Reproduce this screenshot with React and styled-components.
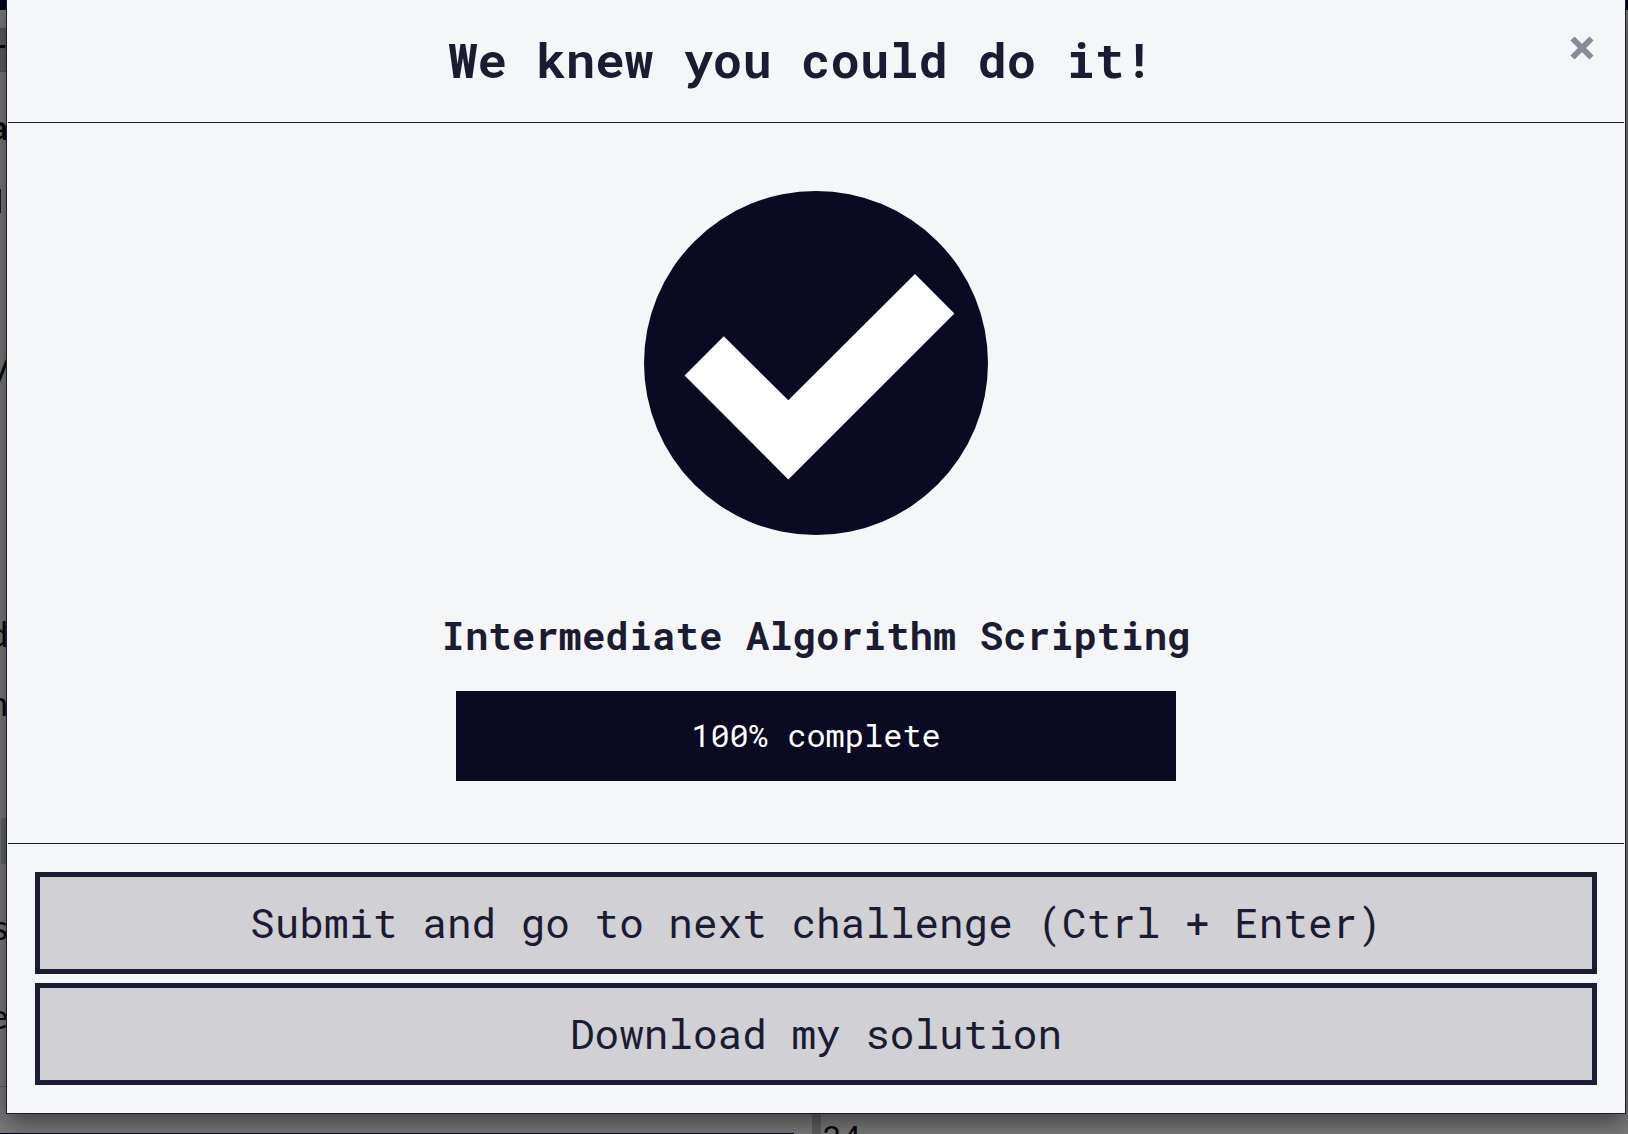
import React from "react";
import styled, { createGlobalStyle } from "styled-components";

const ink = "#1b1b32";
const deep = "#0a0a23";
const paper = "#f5f6f7";
const mono = '"Roboto Mono", "DejaVu Sans Mono", "Liberation Mono", monospace';

const GlobalStyle = createGlobalStyle`
  *, *::before, *::after { box-sizing: border-box; }
  html, body { margin: 0; height: 100%; overflow: hidden; }
  #root { height: 100%; }
`;

const Page = styled.div`
  position: relative;
  height: 100%;
  overflow: hidden;
  background: #7c7c7c;
`;

/* The dimmed lesson page that the dialog lies over */
const Backdrop = styled.div`
  position: absolute;
  inset: 0;
  display: flex;
  flex-direction: column;
  font-family: Lato, sans-serif;
  color: #08080f;
`;

const NavBar = styled.div`
  flex: none;
  height: 10px;
  background: #03031a;
`;

const Panes = styled.div`
  display: flex;
  flex: 1;
  min-height: 0;
`;

const LessonPane = styled.div`
  display: flex;
  flex: 0 0 calc(50% - 2px);
  flex-direction: column;
  padding-right: 18px;
`;

const LessonRow = styled.div`
  display: flex;
  flex: none;
  align-items: center;
  justify-content: flex-end;
  width: 8px;
  height: ${(p) => p.$height}px;
  font-size: 34px;
  line-height: 40px;
  font-weight: ${(p) => (p.$bold ? 700 : 400)};
  font-style: ${(p) => (p.$italic ? "italic" : "normal")};
`;

const TabRow = styled(LessonRow)`
  border-top: 1px solid #555;
  border-bottom: 1px solid #555;
  background: #606064;
  font-family: ${mono};
`;

const CodeRow = styled(LessonRow)`
  border-left: 1px solid #7c7c7c;
  background: #66676b;
`;

const Caret = styled.div`
  width: 1px;
  height: 24px;
  margin-right: auto;
  background: ${ink};
`;

const LessonEnd = styled.div`
  flex: 1;
  border-top: 1px solid #606060;
  border-bottom: 1px solid #03031a;
`;

const Splitter = styled.div`
  flex: none;
  width: 9px;
  background: #606064;
`;

const EditorPane = styled.div`
  display: flex;
  flex: 1;
  flex-direction: column;
  justify-content: flex-end;
  padding-left: 2px;
`;

const LineNumber = styled.div`
  height: 16px;
  font-family: ${mono};
  font-size: 32px;
  line-height: 36px;
`;

const Dialog = styled.section`
  position: relative;
  margin: 0 2px 0 6px;
  padding: 0 1px;
  border: 1px solid ${ink};
  border-top: 0;
  background: ${paper};
  color: ${ink};
  font-family: ${mono};
  box-shadow: 0 8px 24px rgba(0, 0, 0, 0.5);
`;

const Header = styled.header`
  display: flex;
  align-items: flex-start;
  padding: 29px 27px 33px;
  border-bottom: 1px solid ${ink};
`;

const Title = styled.h1`
  flex: 1;
  margin: 0;
  font-size: 49px;
  line-height: 60px;
  font-weight: 700;
  text-align: center;
`;

const CloseButton = styled.button`
  display: flex;
  padding: 6px 2px;
  border: 0;
  background: none;
  color: #8a8a98;
`;

const Body = styled.div`
  display: flex;
  flex-direction: column;
  align-items: center;
  padding: 68px 27px 62px;
`;

const Subtitle = styled.h2`
  margin: 75px 0 31px;
  font-size: 39px;
  line-height: 50px;
  font-weight: 700;
  text-align: center;
`;

const Progress = styled.div`
  display: flex;
  align-items: center;
  justify-content: center;
  width: 720px;
  max-width: 100%;
  height: 90px;
  padding-bottom: 2px;
  background: ${deep};
  color: #fff;
  font-size: 32px;
  line-height: 40px;
`;

const Footer = styled.footer`
  display: flex;
  flex-direction: column;
  gap: 9px;
  padding: 28px 27px;
  border-top: 1px solid ${ink};
`;

const ActionButton = styled.button`
  width: 100%;
  height: 102px;
  padding: 0 12px 2px;
  border: 5px solid ${ink};
  border-radius: 0;
  background: #d0d0d5;
  color: ${ink};
  font-family: ${mono};
  font-size: 41px;
  line-height: 50px;
`;

function CheckIcon() {
  return (
    <svg width="344" height="344" viewBox="0 0 344 344" role="img" aria-label="Passed">
      <circle cx="172" cy="172" r="172" fill={deep} />
      <path d="M40.6 184.6 79.8 145.2 144.3 209.3 271 83 310.4 122.6 144.3 288.4Z" fill="#fff" />
    </svg>
  );
}

function CloseIcon() {
  return (
    <svg width="26" height="26" viewBox="0 0 26 26" aria-hidden="true">
      <path d="M3.5 3.5 22.5 22.5M22.5 3.5 3.5 22.5" stroke="currentColor" strokeWidth="6" />
    </svg>
  );
}

export default function App() {
  return (
    <Page>
      <GlobalStyle />
      <Backdrop aria-hidden="true">
        <NavBar />
        <Panes>
          <LessonPane>
            <LessonRow $height={18} />
            <TabRow $height={44}>r</TabRow>
            <LessonRow $height={110} $bold>a</LessonRow>
            <LessonRow $height={38}>
              <Caret />
            </LessonRow>
            <LessonRow $height={302} $italic>W</LessonRow>
            <LessonRow $height={78} />
            <LessonRow $height={68}>d</LessonRow>
            <LessonRow $height={70}>n</LessonRow>
            <LessonRow $height={80} />
            <CodeRow $height={46} />
            <LessonRow $height={126}>s</LessonRow>
            <LessonRow $height={52}>e</LessonRow>
            <LessonRow $height={44} />
            <LessonEnd />
          </LessonPane>
          <Splitter />
          <EditorPane>
            <LineNumber>24</LineNumber>
          </EditorPane>
        </Panes>
      </Backdrop>
      <Dialog role="dialog" aria-labelledby="dialog-title">
        <Header>
          <Title id="dialog-title">We knew you could do it!</Title>
          <CloseButton type="button" aria-label="Close">
            <CloseIcon />
          </CloseButton>
        </Header>
        <Body>
          <CheckIcon />
          <Subtitle>Intermediate Algorithm Scripting</Subtitle>
          <Progress>100% complete</Progress>
        </Body>
        <Footer>
          <ActionButton type="button">Submit and go to next challenge (Ctrl + Enter)</ActionButton>
          <ActionButton type="button">Download my solution</ActionButton>
        </Footer>
      </Dialog>
    </Page>
  );
}
